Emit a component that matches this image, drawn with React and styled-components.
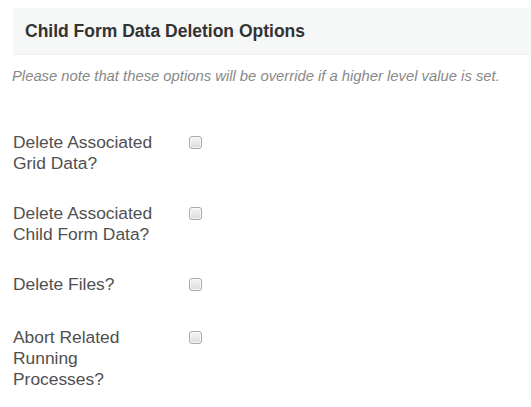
import React from "react";
import styled, { createGlobalStyle } from "styled-components";

const GlobalStyle = createGlobalStyle`
  body {
    margin: 0;
    background: #fff;
    font-family: "Liberation Sans", Arial, sans-serif;
  }
`;

const Page = styled.div`
  padding: 8px 0 0 13px;
`;

const Header = styled.div`
  height: 46px;
  display: flex;
  align-items: center;
  padding-left: 12px;
  background: #f6f7f7;
  border-bottom: 1px solid #f0f1f1;

  h3 {
    margin: 0;
    font-size: 17.5px;
    font-weight: 700;
    color: #333;
  }
`;

const Note = styled.p`
  margin: 12px 0 0 -1px;
  font-size: 14.8px;
  line-height: 19px;
  font-style: italic;
  color: #888;
`;

const Options = styled.div`
  display: flex;
  flex-direction: column;
  gap: 29px;
  margin-top: 46px;
`;

const Row = styled.label`
  display: flex;
  align-items: flex-start;
  margin-top: ${(p) => p.$extra || 0}px;
`;

const Label = styled.span`
  width: 150px;
  margin-right: 26px;
  font-size: 17.4px;
  line-height: 21px;
  color: #505050;
`;

const Box = styled.span`
  width: 13px;
  height: 13px;
  margin-top: 4px;
  box-sizing: border-box;
  border: 1px solid #a9a9a9;
  border-radius: 3px;
  background: linear-gradient(#f4f4f4, #dcdcdc);
  box-shadow: inset 0 0 0 1px rgba(255, 255, 255, 0.7);
`;

const options = [
  { text: "Delete Associated Grid Data?" },
  { text: "Delete Associated Child Form Data?" },
  { text: "Delete Files?" },
  { text: "Abort Related Running Processes?", extra: 3 },
];

export default function App() {
  return (
    <Page>
      <GlobalStyle />
      <Header>
        <h3>Child Form Data Deletion Options</h3>
      </Header>
      <Note>Please note that these options will be override if a higher level value is set.</Note>
      <Options>
        {options.map((o, i) => (
          <Row key={i} $extra={o.extra}>
            <Label>{o.text}</Label>
            <Box />
          </Row>
        ))}
      </Options>
    </Page>
  );
}
